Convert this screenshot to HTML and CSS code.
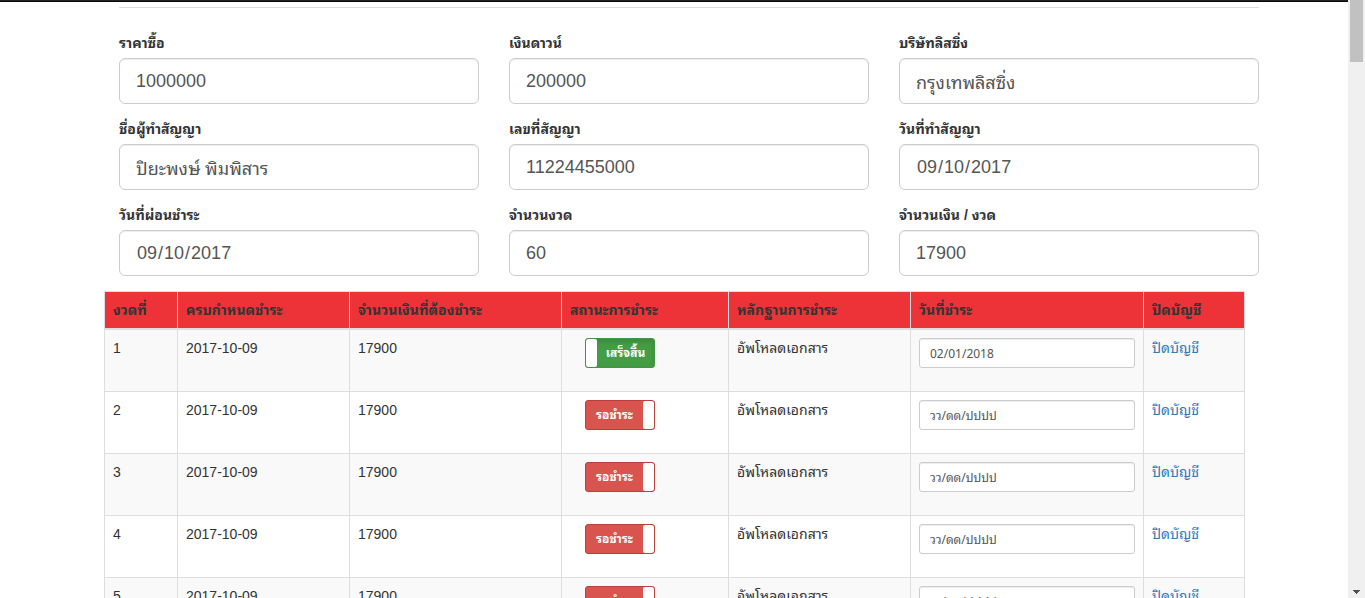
FILE: index.html
```
<!DOCTYPE html>
<html lang="th">
<head>
<meta charset="utf-8">
<title>ปิดบัญชี</title>
<link rel="stylesheet" href="styles.css">
</head>
<body>
<div class="page">
  <header class="navbar"></header>
  <main class="container">
    <form class="contract">
      <hr class="rule">
      <div class="fields">
        <div class="field"><label for="price">ราคาซื้อ</label><input class="control" id="price" type="text" value="1000000"></div>
        <div class="field"><label for="down">เงินดาวน์</label><input class="control" id="down" type="text" value="200000"></div>
        <div class="field"><label for="company">บริษัทลิสซิ่ง</label><input class="control" id="company" type="text" value="กรุงเทพลิสซิ่ง"></div>
        <div class="field"><label for="owner">ชื่อผู้ทำสัญญา</label><input class="control" id="owner" type="text" value="ปิยะพงษ์ พิมพิสาร"></div>
        <div class="field"><label for="number">เลขที่สัญญา</label><input class="control" id="number" type="text" value="11224455000"></div>
        <div class="field"><label for="signed">วันที่ทำสัญญา</label><input class="control" id="signed" type="date" value="2017-09-10"></div>
        <div class="field"><label for="due">วันที่ผ่อนชำระ</label><input class="control" id="due" type="date" value="2017-09-10"></div>
        <div class="field"><label for="count">จำนวนงวด</label><input class="control" id="count" type="text" value="60"></div>
        <div class="field"><label for="amount">จำนวนเงิน / งวด</label><input class="control" id="amount" type="text" value="17900"></div>
      </div>
    </form>
    <table class="installments">
      <colgroup>
        <col class="col-no"><col class="col-due"><col class="col-amount"><col class="col-status"><col class="col-proof"><col class="col-paid"><col class="col-close">
      </colgroup>
      <thead>
        <tr><th>งวดที่</th><th>ครบกำหนดชำระ</th><th>จำนวนเงินที่ต้องชำระ</th><th>สถานะการชำระ</th><th>หลักฐานการชำระ</th><th>วันที่ชำระ</th><th>ปิดบัญชี</th></tr>
      </thead>
      <tbody>
        <tr>
          <td>1</td><td>2017-10-09</td><td>17900</td>
          <td><label class="toggle toggle-on"><input type="checkbox" checked><span class="toggle-text">เสร็จสิ้น</span><span class="toggle-handle"></span></label></td>
          <td>อัพโหลดเอกสาร</td>
          <td><input class="control control-small" type="text" aria-label="วันที่ชำระ" value="02/01/2018"></td>
          <td><a href="#">ปิดบัญชี</a></td>
        </tr>
        <tr>
          <td>2</td><td>2017-10-09</td><td>17900</td>
          <td><label class="toggle"><input type="checkbox"><span class="toggle-text">รอชำระ</span><span class="toggle-handle"></span></label></td>
          <td>อัพโหลดเอกสาร</td>
          <td><input class="control control-small" type="text" aria-label="วันที่ชำระ" placeholder="วว/ดด/ปปปป"></td>
          <td><a href="#">ปิดบัญชี</a></td>
        </tr>
        <tr>
          <td>3</td><td>2017-10-09</td><td>17900</td>
          <td><label class="toggle"><input type="checkbox"><span class="toggle-text">รอชำระ</span><span class="toggle-handle"></span></label></td>
          <td>อัพโหลดเอกสาร</td>
          <td><input class="control control-small" type="text" aria-label="วันที่ชำระ" placeholder="วว/ดด/ปปปป"></td>
          <td><a href="#">ปิดบัญชี</a></td>
        </tr>
        <tr>
          <td>4</td><td>2017-10-09</td><td>17900</td>
          <td><label class="toggle"><input type="checkbox"><span class="toggle-text">รอชำระ</span><span class="toggle-handle"></span></label></td>
          <td>อัพโหลดเอกสาร</td>
          <td><input class="control control-small" type="text" aria-label="วันที่ชำระ" placeholder="วว/ดด/ปปปป"></td>
          <td><a href="#">ปิดบัญชี</a></td>
        </tr>
        <tr>
          <td>5</td><td>2017-10-09</td><td>17900</td>
          <td><label class="toggle"><input type="checkbox"><span class="toggle-text">รอชำระ</span><span class="toggle-handle"></span></label></td>
          <td>อัพโหลดเอกสาร</td>
          <td><input class="control control-small" type="text" aria-label="วันที่ชำระ" placeholder="วว/ดด/ปปปป"></td>
          <td><a href="#">ปิดบัญชี</a></td>
        </tr>
      </tbody>
    </table>
  </main>
</div>
<div class="scrollbar" aria-hidden="true">
  <div class="scrollbar-thumb"></div>
  <svg class="scrollbar-arrow" width="7" height="4" viewBox="0 0 7 4" shape-rendering="crispEdges"><path d="M0 0h7v1H6v1H5v1H4v1H3V3H2V2H1V1H0z" fill="#505050"/></svg>
</div>
</body>
</html>
```

FILE: styles.css
```
* { box-sizing: border-box; }

body {
  display: flex;
  height: 100vh;
  margin: 0;
  overflow: hidden;
  background: #fff;
  color: #333;
  font-family: "Liberation Sans", "Noto Sans Thai Looped", Loma, Waree, Garuda, "Noto Sans Thai", "Noto Sans", sans-serif;
  font-size: 14px;
  line-height: 20px;
}

.page {
  flex: 1;
  min-width: 0;
  overflow: hidden;
}

.navbar {
  height: 2px;
  background: #222;
  border-bottom: 1px solid #080808;
}

.container {
  max-width: 1170px;
  margin: 0 auto;
  padding: 0 15px;
}

.contract { margin: 0 -15px 0 15px; }

.rule {
  margin: 5px 0 25px;
  border: 0;
  border-top: 1px solid #ddd;
}

.fields {
  display: grid;
  grid-template-columns: repeat(3, 1fr);
  gap: 15px 30px;
  margin-bottom: 15px;
}

.field {
  display: flex;
  flex-direction: column;
  gap: 5px;
  min-width: 0;
}

.field label {
  height: 20px;
  font-weight: bold;
}

.control {
  display: block;
  width: 100%;
  height: 46px;
  padding: 10px 16px;
  border: 1px solid #ccc;
  border-radius: 6px;
  background: #fff;
  box-shadow: inset 0 1px 1px rgba(0, 0, 0, .075);
  color: #555;
  font-family: inherit;
  font-size: 18px;
  line-height: 24px;
}

.control::-webkit-calendar-picker-indicator { display: none; }

.control-small {
  height: 30px;
  margin-bottom: 15px;
  padding: 5px 10px;
  border-radius: 3px;
  font-family: "Noto Sans", "Noto Sans Thai Looped", Loma, Waree, Garuda, "Noto Sans Thai", sans-serif;
  font-size: 12px;
  line-height: 18px;
}

.control::placeholder {
  color: #555;
  opacity: 1;
}

.installments {
  width: 100%;
  table-layout: fixed;
  border-collapse: collapse;
}

.col-no { width: 73px; }
.col-due { width: 172px; }
.col-amount { width: 212px; }
.col-status { width: 167px; }
.col-proof { width: 182px; }
.col-paid { width: 233px; }
.col-close { width: 101px; }

.installments th,
.installments td {
  padding: 8px;
  border: 1px solid #ddd;
  text-align: left;
  vertical-align: top;
}

.installments th {
  border-bottom-width: 2px;
  background: #ee3338;
}

.installments tbody tr:nth-child(odd) { background: #f9f9f9; }

.installments a {
  color: #337ab7;
  text-decoration: none;
}

.toggle {
  position: relative;
  display: flex;
  width: 70px;
  height: 30px;
  margin: 0 15px 15px;
  overflow: hidden;
  border: 1px solid #b9403c;
  border-radius: 3px;
  background: #d9534f;
  color: #fff;
  font-size: 12px;
  font-weight: bold;
  line-height: 28px;
  cursor: pointer;
}

.toggle input {
  position: absolute;
  margin: 0;
  opacity: 0;
}

.toggle-text {
  flex: 1;
  text-align: center;
}

.toggle-handle {
  width: 11px;
  border-radius: 2px;
  background: #fff;
}

.toggle-on {
  flex-direction: row-reverse;
  border-color: #419641;
  background: #449d44;
  box-shadow: inset 0 3px 5px rgba(0, 0, 0, .125);
}

.scrollbar {
  display: flex;
  flex-direction: column;
  align-items: center;
  justify-content: space-between;
  width: 17px;
  padding-bottom: 4px;
  background: #f0f0f0;
}

.scrollbar-thumb {
  width: 13px;
  height: 62px;
  background: #c1c1c1;
}
```
